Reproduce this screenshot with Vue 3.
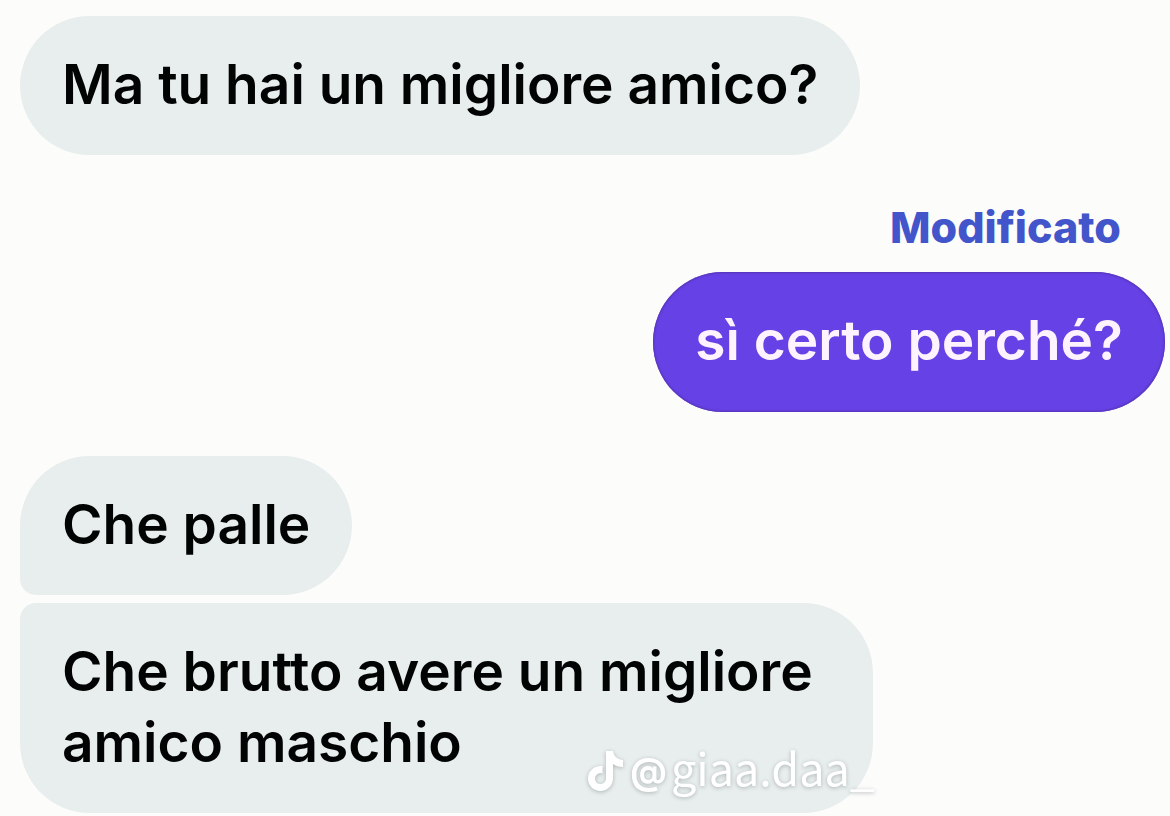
<script setup>
const messages = [
  { id: 1, side: 'received', shape: 'single', text: 'Ma tu hai un migliore amico?' },
  { id: 2, side: 'sent', shape: 'single', label: 'Modificato', text: 'sì certo perché?' },
  { id: 3, side: 'received', shape: 'first', text: 'Che palle' },
  { id: 4, side: 'received', shape: 'last', text: 'Che brutto avere un migliore amico maschio' },
]
</script>

<template>
  <main class="chat">
    <article v-for="m in messages" :key="m.id" class="message" :class="[m.side, m.shape]">
      <span v-if="m.label" class="label">{{ m.label }}</span>
      <p class="bubble">{{ m.text }}</p>
    </article>
    <div class="watermark">
      <svg class="note" viewBox="0 0 36 40" aria-hidden="true">
        <path
          d="M18 0h7c.5 5 4.500 8.500 10 9v7c-4 0-7.500-1.200-10-3v14c0 7.500-5.500 13-12.500 13S0 34.500 0 27.500 5.700 15 12.500 15c.8 0 1.500 0 2 .2v7.200c-.6-.2-1.200-.3-2-.3A5.400 5.400 0 0 0 7 27.500a5.400 5.400 0 0 0 5.500 5.500c3.200 0 5.500-2.400 5.500-5.800z"
        />
      </svg>
      <span class="at">@</span>
      <span class="handle">giaa.daa_</span>
    </div>
  </main>
</template>

<style>
body {
  margin: 0;
  background: #fcfcfb;
}
</style>

<style scoped>
.chat {
  position: relative;
  box-sizing: border-box;
  display: flex;
  flex-direction: column;
  padding: 16px 5px 3px 20px;
  font-family: Inter, "Liberation Sans", sans-serif;
}

.message {
  display: flex;
  flex-direction: column;
  align-items: flex-start;
}

.bubble {
  box-sizing: border-box;
  max-width: 853px;
  margin: 0;
  padding: 33px 42px 35px;
  border-radius: 70px;
  background: #e8eeed;
  color: #020403;
  font-size: 55px;
  font-weight: 600;
  line-height: 71px;
}

.sent {
  align-items: flex-end;
  margin: 48px 0 44px;
}

.sent .bubble {
  padding-bottom: 36px;
  background: #6641e5;
  box-shadow: inset 0 0 2px 1px #5534b4;
  color: #fdf3fe;
}

.label {
  margin-right: 44px;
  margin-bottom: 20px;
  color: #4355ca;
  font-size: 43px;
  font-weight: 800;
  line-height: 49px;
}

.first .bubble {
  border-bottom-left-radius: 16px;
}

.last {
  margin-top: 8px;
}

.last .bubble {
  border-top-left-radius: 16px;
}

.watermark {
  position: absolute;
  right: 295px;
  bottom: 16px;
  display: flex;
  align-items: center;
  color: #fff;
  line-height: 50px;
  white-space: nowrap;
  filter: drop-shadow(0 1px 2px rgb(100 110 110 / 45%));
}

.note {
  width: 36px;
  height: 40px;
  margin-right: 6px;
  fill: currentColor;
}

.at {
  margin-right: 4px;
  font-size: 36px;
  font-weight: 700;
}

.handle {
  margin-bottom: 8px;
  font-family: "Noto Sans CJK SC", "Noto Sans", sans-serif;
  font-size: 45px;
  font-weight: 400;
}
</style>
